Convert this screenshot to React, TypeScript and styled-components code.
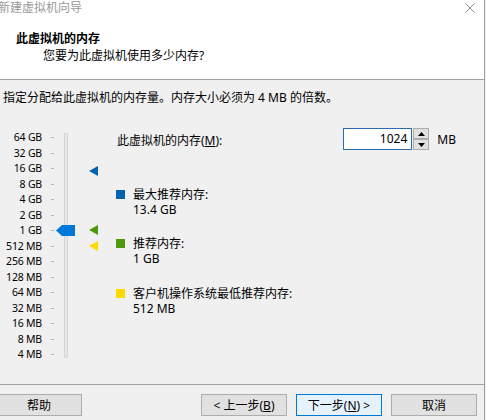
import React from 'react';
import styled, { createGlobalStyle } from 'styled-components';

const GlobalStyle = createGlobalStyle`
  html, body {
    margin: 0;
    padding: 0;
    background: #f0f0f0;
  }
  body {
    font-family: "Noto Sans", "Noto Sans CJK SC", sans-serif;
    font-size: 12px;
    color: #000;
  }
`;

const Window = styled.div`
  width: 485px;
  height: 420px;
  box-sizing: border-box;
  border-right: 1px solid #a0a0a0;
  display: flex;
  flex-direction: column;
  overflow: hidden;
`;

const Header = styled.header`
  height: 80px;
  box-sizing: border-box;
  background: #fff;
  border-bottom: 1px solid #a0a0a0;
  display: flex;
  flex-direction: column;
`;

const TitleBar = styled.div`
  height: 16px;
  display: flex;
  align-items: center;
  justify-content: space-between;
  margin-left: -2px;
  padding-right: 9px;
  color: #999;
  line-height: 16px;
`;

const Heading = styled.div`
  margin: 15px 0 0 16px;
  line-height: 15px;
  font-weight: bold;
`;

const Subtitle = styled.div`
  margin: 2px 0 0 43px;
  line-height: 15px;
`;

const Body = styled.main`
  flex: 1;
  display: flex;
  flex-direction: column;
`;

const Instruction = styled.div`
  margin: 9.5px 0 0 3px;
  line-height: 15px;
`;

const SliderArea = styled.div`
  display: flex;
  align-items: flex-start;
  margin-top: 23.5px;
`;

const Scale = styled.div`
  position: relative;
  width: 116px;
  display: flex;
  align-items: flex-start;
`;

const Ticks = styled.div`
  display: flex;
  flex-direction: column;
  padding-top: 2px;
`;

const Tick = styled.div`
  height: 15.5px;
  display: flex;
  align-items: center;
`;

const TickLabel = styled.span`
  width: 42px;
  text-align: right;
  font-size: 10.5px;
  letter-spacing: -0.2px;
  line-height: 15px;
  white-space: nowrap;
`;

const Dash = styled.span`
  width: 3px;
  height: 1px;
  margin-left: 9px;
  background: #b4b4b4;
`;

const Track = styled.div`
  width: 4px;
  height: 225px;
  margin: 5px 0 0 10px;
  box-sizing: border-box;
  border: 1px solid #d6d6d6;
  background: #e7e7e7;
`;

const Thumb = styled.svg`
  position: absolute;
  left: 56px;
  top: 97px;
`;

const Arrow = styled.span<{ $color: string; $top: number }>`
  position: absolute;
  left: 89px;
  top: ${(p) => p.$top}px;
  width: 0;
  height: 0;
  border-top: 5px solid transparent;
  border-bottom: 5px solid transparent;
  border-right: 9px solid ${(p) => p.$color};
`;

const Panel = styled.div`
  flex: 1;
  padding-right: 28px;
  display: flex;
  flex-direction: column;
`;

const MemoryRow = styled.div`
  height: 22px;
  display: flex;
  align-items: center;
`;

const FieldLabel = styled.span`
  flex: 1;
  padding: 3px 0 0 1px;
  line-height: 15px;
`;

const Input = styled.div`
  width: 69px;
  height: 22px;
  box-sizing: border-box;
  border: 1px solid #2a6cac;
  background: #fff;
  text-align: right;
  padding-right: 4px;
  line-height: 20px;
`;

const Spinner = styled.div`
  width: 16px;
  height: 22px;
  margin-left: 1px;
  display: flex;
  flex-direction: column;
`;

const SpinButton = styled.div`
  height: 11px;
  box-sizing: border-box;
  border: 1px solid #adadad;
  background: #e1e1e1;
  display: flex;
  align-items: center;
  justify-content: center;
`;

const Unit = styled.span`
  margin-left: 8px;
  line-height: 15px;
`;

const Legend = styled.div`
  margin-top: 36.5px;
  display: flex;
  flex-direction: column;
  gap: 19.5px;
`;

const LegendItem = styled.div`
  display: flex;
  align-items: flex-start;
`;

const Swatch = styled.span<{ $color: string }>`
  width: 9px;
  height: 9px;
  margin-top: 3px;
  background: ${(p) => p.$color};
  flex-shrink: 0;
`;

const LegendText = styled.div`
  margin-left: 8px;
  line-height: 15px;
`;

const Footer = styled.footer`
  height: 36px;
  box-sizing: border-box;
  border-top: 1px solid #a0a0a0;
  padding: 9px 7px 0 0;
  display: flex;
  align-items: flex-start;
`;

const Button = styled.button<{ $default?: boolean }>`
  width: 86px;
  height: 22px;
  box-sizing: border-box;
  padding: 2px 0 0;
  border: 1px solid ${(p) => (p.$default ? '#0078d7' : '#adadad')};
  background: ${(p) => (p.$default ? '#e5f1fb' : '#e1e1e1')};
  font: inherit;
  line-height: 16px;
  color: #000;
`;

const HelpButton = styled(Button)`
  margin-left: -4px;
`;

const NavGroup = styled.div`
  margin-left: auto;
  display: flex;
  gap: 9px;
`;

const ticks = [
  '64 GB', '32 GB', '16 GB', '8 GB', '4 GB', '2 GB', '1 GB',
  '512 MB', '256 MB', '128 MB', '64 MB', '32 MB', '16 MB', '8 MB', '4 MB',
];

const BLUE = '#0063b1';
const GREEN = '#4c9a0c';
const YELLOW = '#ffd800';

const legend = [
  { color: BLUE, label: '最大推荐内存:', value: '13.4 GB' },
  { color: GREEN, label: '推荐内存:', value: '1 GB' },
  { color: YELLOW, label: '客户机操作系统最低推荐内存:', value: '512 MB' },
];

const App: React.FC = () => {
  return (
    <>
      <GlobalStyle />
      <Window>
        <Header>
          <TitleBar>
            <span>新建虚拟机向导</span>
            <svg width="10" height="10" viewBox="0 0 10 10">
              <path d="M0.5 0.5 L9.5 9.5 M9.5 0.5 L0.5 9.5" stroke="#8a8a8a" strokeWidth="1" />
            </svg>
          </TitleBar>
          <Heading>此虚拟机的内存</Heading>
          <Subtitle>您要为此虚拟机使用多少内存?</Subtitle>
        </Header>
        <Body>
          <Instruction>指定分配给此虚拟机的内存量。内存大小必须为 4 MB 的倍数。</Instruction>
          <SliderArea>
            <Scale>
              <Ticks>
                {ticks.map((t) => (
                  <Tick key={t}>
                    <TickLabel>{t}</TickLabel>
                    <Dash />
                  </Tick>
                ))}
              </Ticks>
              <Track />
              <Thumb width="19" height="11" viewBox="0 0 19 11">
                <polygon points="0,5.5 6,0 19,0 19,11 6,11" fill="#0078d7" />
              </Thumb>
              <Arrow $color={BLUE} $top={38} />
              <Arrow $color={GREEN} $top={97} />
              <Arrow $color={YELLOW} $top={113} />
            </Scale>
            <Panel>
              <MemoryRow>
                <FieldLabel>
                  此虚拟机的内存(<u>M</u>):
                </FieldLabel>
                <Input>1024</Input>
                <Spinner>
                  <SpinButton>
                    <svg width="7" height="4" viewBox="0 0 7 4">
                      <polygon points="0,4 3.5,0 7,4" fill="#000" />
                    </svg>
                  </SpinButton>
                  <SpinButton>
                    <svg width="7" height="4" viewBox="0 0 7 4">
                      <polygon points="0,0 7,0 3.5,4" fill="#000" />
                    </svg>
                  </SpinButton>
                </Spinner>
                <Unit>MB</Unit>
              </MemoryRow>
              <Legend>
                {legend.map((item) => (
                  <LegendItem key={item.label}>
                    <Swatch $color={item.color} />
                    <LegendText>
                      <div>{item.label}</div>
                      <div>{item.value}</div>
                    </LegendText>
                  </LegendItem>
                ))}
              </Legend>
            </Panel>
          </SliderArea>
        </Body>
        <Footer>
          <HelpButton>帮助</HelpButton>
          <NavGroup>
            <Button>
              &lt; 上一步(<u>B</u>)
            </Button>
            <Button $default>
              下一步(<u>N</u>) &gt;
            </Button>
            <Button>取消</Button>
          </NavGroup>
        </Footer>
      </Window>
    </>
  );
};

export default App;
